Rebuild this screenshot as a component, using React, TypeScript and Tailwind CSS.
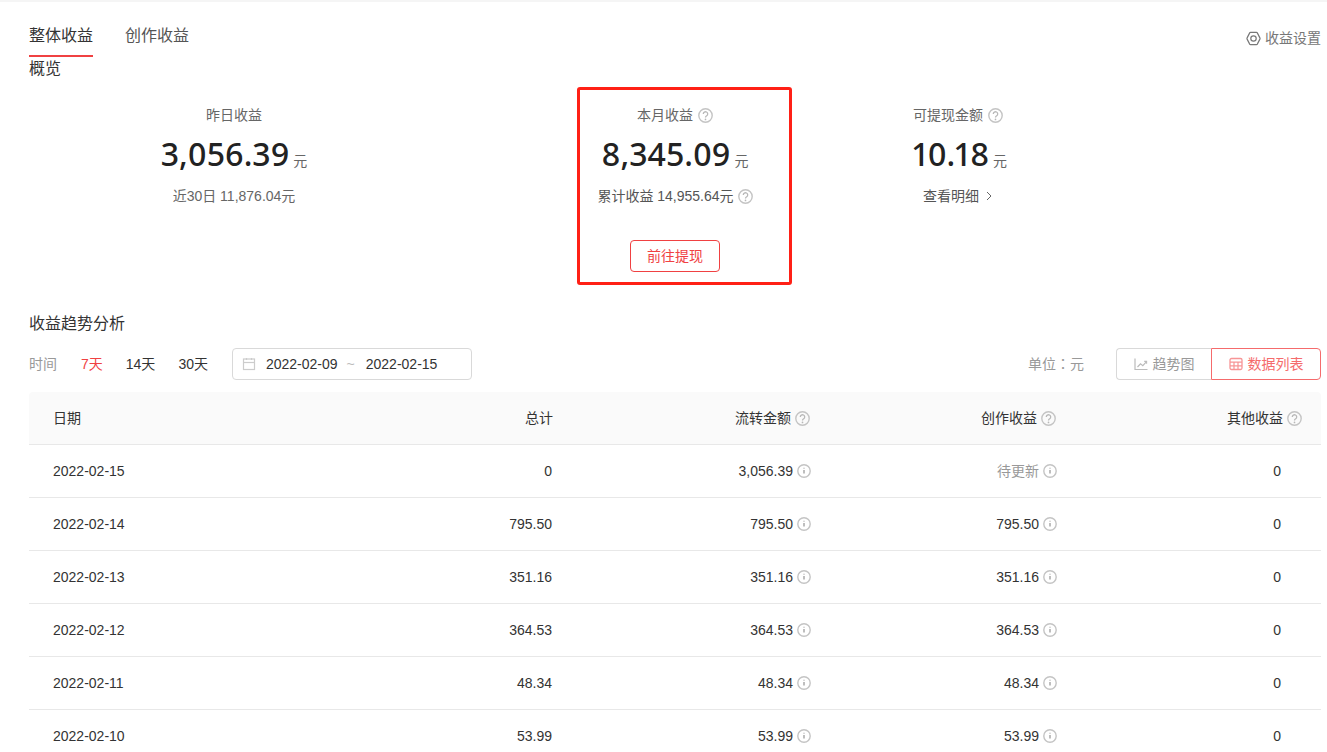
import React from "react";

const Q = ({ className = "" }: { className?: string }) => (
  <svg width="15" height="15" viewBox="0 0 15 15" fill="none" className={className}>
    <circle cx="7.5" cy="7.5" r="6.7" stroke="#c4c4c4" strokeWidth="1.4" />
    <path d="M5.3 6a2.2 2.2 0 1 1 3.4 1.8c-.8.5-1.2.8-1.2 1.7" stroke="#b8b8b8" strokeWidth="1.3" />
    <circle cx="7.5" cy="11.4" r=".85" fill="#b8b8b8" />
  </svg>
);

const I = () => (
  <svg width="14" height="14" viewBox="0 0 14 14" fill="none" className="ml-[4px] shrink-0">
    <circle cx="7" cy="7" r="6.2" stroke="#c4c4c4" strokeWidth="1.4" />
    <path d="M7 6v3.6" stroke="#a8a8a8" strokeWidth="1.5" />
    <circle cx="7" cy="4.2" r=".75" fill="#c0c0c0" />
  </svg>
);

type Row = [string, string, string, string, string];
const rows: Row[] = [
  ["2022-02-15", "0", "3,056.39", "待更新", "0"],
  ["2022-02-14", "795.50", "795.50", "795.50", "0"],
  ["2022-02-13", "351.16", "351.16", "351.16", "0"],
  ["2022-02-12", "364.53", "364.53", "364.53", "0"],
  ["2022-02-11", "48.34", "48.34", "48.34", "0"],
  ["2022-02-10", "53.99", "53.99", "53.99", "0"],
];

const Big = ({ v, className = "" }: { v: string; className?: string }) => (
  <div className={`flex items-baseline justify-center h-[36px] mt-[11px] ${className}`}>
    <span className="text-[32px] leading-[36px] font-medium proportional-nums text-[#222222] font-['Noto_Sans','Noto_Sans_CJK_SC',sans-serif]">{v}</span>
    <span className="text-[14px] text-[#666666] ml-[4px]">元</span>
  </div>
);

export default function App() {
  return (
    <div className="h-[752px] overflow-hidden bg-white text-[14px] text-[#333333] font-['Liberation_Sans','Noto_Sans_CJK_SC',sans-serif]">
      <div className="h-[2px] bg-[#f5f5f5]" />
      <div className="pl-[29px] pr-[6px]">
        <div className="flex justify-between">
          <div className="flex gap-[32px] h-[55px] pt-[22px]">
            <div className="h-[33px] border-b-2 border-[#f04142] text-[16px] leading-[24px] text-[#333333]">整体收益</div>
            <div className="text-[16px] leading-[24px] text-[#555555]">创作收益</div>
          </div>
          <div className="flex items-center h-[20px] mt-[26px] text-[#777777]">
            <svg width="15" height="15" viewBox="0 0 15 15" fill="none" className="mr-[4px]">
              <path d="M4.6 1.4h5.8a1 1 0 0 1 .9.5l2.6 5a1.2 1.2 0 0 1 0 1.2l-2.6 5a1 1 0 0 1-.9.5H4.6a1 1 0 0 1-.9-.5l-2.6-5a1.2 1.2 0 0 1 0-1.2l2.6-5a1 1 0 0 1 .9-.5Z" stroke="#777" strokeWidth="1.2" />
              <circle cx="7.5" cy="7.5" r="2.7" stroke="#777" strokeWidth="1.2" />
            </svg>
            收益设置
          </div>
        </div>
        <div className="text-[16px] leading-[22px] mt-[1px]">概览</div>

        <div className="flex mt-[7px] h-[198px]">
          <div className="w-[410px] text-center pt-[18px]">
            <div className="leading-[20px] text-[#666666]">昨日收益</div>
            <Big v="3,056.39" />
            <div className="leading-[20px] mt-[14px] text-[#666666]">近30日 11,876.04元</div>
          </div>
          <div className="ml-[138px] w-[215px] h-[198px] border-[3px] border-[#ff2016] rounded-[3px] pr-[19px] pt-[15px] flex flex-col items-center">
            <div className="flex items-center leading-[20px] text-[#666666]">本月收益<Q className="ml-[5px]" /></div>
            <Big v="8,345.09" />
            <div className="flex items-center whitespace-nowrap leading-[20px] mt-[14px] text-[#555555]">累计收益 14,955.64元<Q className="ml-[4px]" /></div>
            <div className="mt-[34px] w-[90px] h-[32px] border border-[#f04142] rounded-[4px] text-[#f04142] flex items-center justify-center">前往提现</div>
          </div>
          <div className="ml-[66px] w-[200px] pt-[18px] flex flex-col items-center">
            <div className="flex items-center leading-[20px] text-[#666666]">可提现金额<Q className="ml-[5px]" /></div>
            <Big v="10.18" className="ml-[4px]" />
            <div className="flex items-center leading-[20px] mt-[14px] text-[#555555]">
              查看明细
              <svg width="8" height="10" viewBox="0 0 8 10" fill="none" className="ml-[6px]"><path d="M2 1l4 4-4 4" stroke="#666" strokeWidth="1" /></svg>
            </div>
          </div>
        </div>

        <div className="text-[16px] leading-[22px] mt-[28px] text-[#333333]">收益趋势分析</div>

        <div className="flex items-center justify-between mt-[13px] h-[32px]">
          <div className="flex items-center">
            <span className="text-[#999999]">时间</span>
            <span className="ml-[24px] text-[#f04142]">7天</span>
            <span className="ml-[23px] text-[#333333]">14天</span>
            <span className="ml-[23px] text-[#333333]">30天</span>
            <div className="ml-[24px] w-[240px] h-[32px] border border-[#d9d9d9] rounded-[4px] flex items-center pl-[9px]">
              <svg width="14" height="14" viewBox="0 0 14 14" fill="none">
                <rect x="1.5" y="2" width="11" height="10.5" stroke="#ccc" strokeWidth="1.2" />
                <path d="M1.5 5.5h11" stroke="#ccc" strokeWidth="1.2" />
                <path d="M4.5 1v2M9.5 1v2" stroke="#ccc" strokeWidth="1.2" />
              </svg>
              <span className="ml-[10px] text-[#333333]">2022-02-09</span>
              <span className="ml-[9px] text-[#bbbbbb]">~</span>
              <span className="ml-[11px] text-[#333333]">2022-02-15</span>
            </div>
          </div>
          <div className="flex items-center">
            <span className="text-[#999999] mr-[32px] font-['Liberation_Sans','Noto_Sans_CJK_TC',sans-serif]">单位：元</span>
            <div className="flex h-[32px]">
              <div className="w-[95px] border border-[#d9d9d9] border-r-0 rounded-l-[4px] flex items-center justify-center text-[#999999]">
                <svg width="14" height="14" viewBox="0 0 14 14" fill="none" className="mr-[5px]">
                  <path d="M1 1.5V12.5H13.5" stroke="#bbb" strokeWidth="1.2" />
                  <path d="M3.5 10 6.5 6.8l2.3 1.8 3.7-4" stroke="#bbb" strokeWidth="1.2" />
                  <path d="M10.2 4.4h2.4v2.4" stroke="#bbb" strokeWidth="1.1" />
                </svg>
                趋势图
              </div>
              <div className="w-[110px] border border-[#f56b6c] rounded-r-[4px] flex items-center justify-center text-[#f56b6c]">
                <svg width="14" height="14" viewBox="0 0 14 14" fill="none" className="mr-[5px]">
                  <rect x="1" y="1.5" width="12" height="11" rx="1.5" stroke="#f79596" strokeWidth="1.3" />
                  <path d="M1 5.2h12M1 8.8h12M5 5.2v7.3M9 5.2v7.3" stroke="#f79596" strokeWidth="1.2" />
                </svg>
                数据列表
              </div>
            </div>
          </div>
        </div>

        <div className="mt-[12px]">
          <div className="grid grid-cols-[200px_324px_258px_246px_246px_18px] h-[53px] items-center bg-[#fafafa] border-b border-[#e8e8e8] rounded-t-[4px] text-[#333333]">
            <div className="pl-[24px]">日期</div>
            <div className="text-right">总计</div>
            <div className="flex items-center justify-end pr-[1px]">流转金额<Q className="ml-[4px]" /></div>
            <div className="flex items-center justify-end pr-[1px]">创作收益<Q className="ml-[4px]" /></div>
            <div className="flex items-center justify-end pr-[1px]">其他收益<Q className="ml-[4px]" /></div>
          </div>
          {rows.map((r) => (
            <div key={r[0]} className="grid grid-cols-[200px_324px_258px_246px_246px_18px] h-[53px] items-center border-b border-[#e8e8e8] text-[#333333]">
              <div className="pl-[24px]">{r[0]}</div>
              <div className="text-right pr-[1px]">{r[1]}</div>
              <div className="flex items-center justify-end">{r[2]}<I /></div>
              <div className="flex items-center justify-end">
                <span className={r[3] === "待更新" ? "text-[#999999]" : ""}>{r[3]}</span><I />
              </div>
              <div className="text-right pr-[22px]">{r[4]}</div>
            </div>
          ))}
        </div>
      </div>
    </div>
  );
}
